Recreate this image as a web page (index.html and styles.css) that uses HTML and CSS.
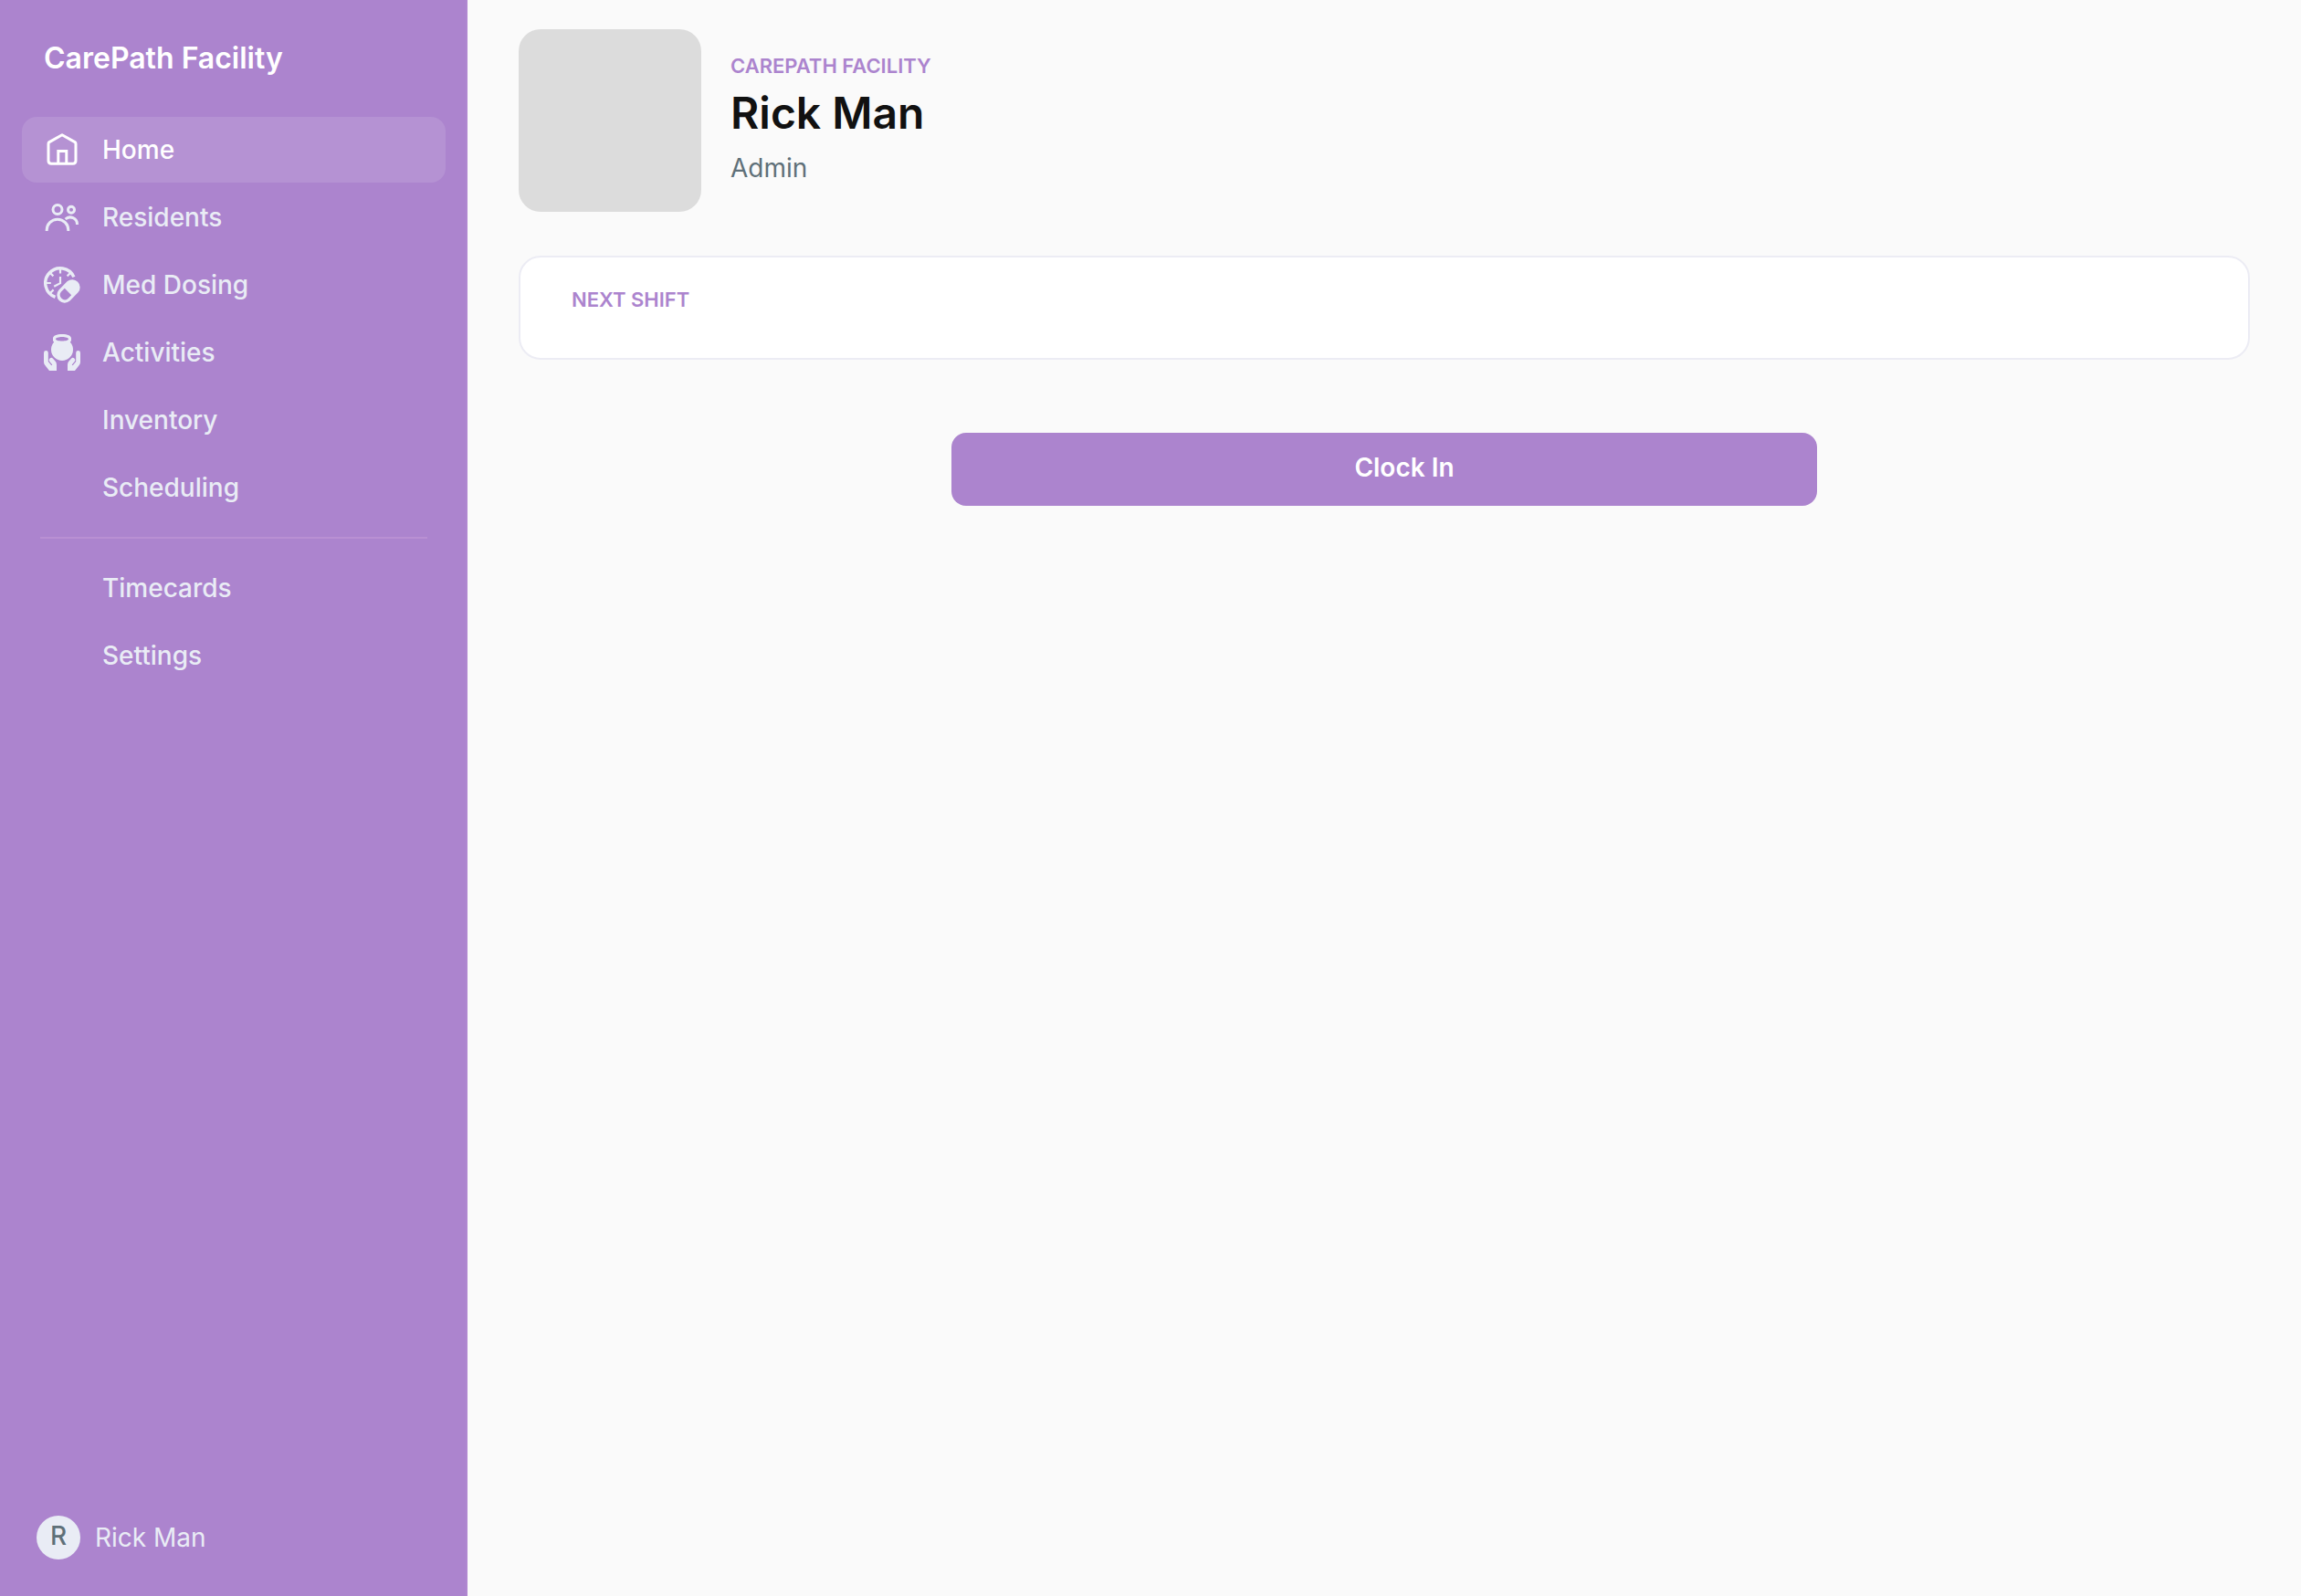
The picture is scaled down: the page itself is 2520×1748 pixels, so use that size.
FILE: index.html
```
<!DOCTYPE html>
<html lang="en">
<head>
    <meta charset="UTF-8">
    <meta name="viewport" content="width=device-width, initial-scale=1.0">
    <title>Home - CarePath Facility</title>
    <link rel="stylesheet" href="styles.css">
</head>
<body>
    <aside class="sidebar">
        <div class="brand">CarePath Facility</div>

        <nav class="nav" aria-label="Main">
            <a class="nav-link active" href="#home" aria-current="page">
                <svg class="nav-icon" viewBox="0 0 40 40" fill="none" stroke="currentColor" stroke-width="3" aria-hidden="true">
                    <path d="M20 3.7 34 11.6Q35 12.3 35 13.4V32Q35 35.2 31.8 35.2H8.2Q5 35.2 5 32V13.4Q5 12.3 6 11.6Z" stroke-linejoin="round"/>
                    <path d="M15.8 35V21.5H24.8V35"/>
                </svg>
                <span>Home</span>
            </a>
            <a class="nav-link" href="#residents">
                <svg class="nav-icon" viewBox="0 0 40 40" fill="none" stroke="currentColor" stroke-width="3" aria-hidden="true">
                    <circle cx="15" cy="11.5" r="5"/>
                    <circle cx="30" cy="11.7" r="3.5"/>
                    <path d="M3.2 35V34A11.8 11.8 0 0 1 26.8 34V35"/>
                    <path d="M23.6 22A7.7 7.7 0 0 1 36.5 28"/>
                </svg>
                <span>Residents</span>
            </a>
            <a class="nav-link" href="#med-dosing">
                <svg class="nav-icon" viewBox="0 0 40 40" fill="none" stroke="currentColor" stroke-width="2.2" aria-hidden="true">
                    <path d="M32.9 11.4A16.3 16.3 0 1 0 12.5 33.4" stroke-width="3.4"/>
                    <path d="M18 3V7.6M3 18H7.8M7 7 10.4 10.4M29 7 25.6 10.4M7 29 10.6 25.4"/>
                    <path d="M18 11V18.2L11.2 21.8"/>
                    <path fill="currentColor" stroke="none" fill-rule="evenodd" d="M16.5 25.5 25.5 16.3A8.5 8.5 0 0 1 37.5 28.3L28.5 37.5A8.5 8.5 0 0 1 16.5 25.5ZM22.8 23.8 18.8 27.8A5.3 5.3 0 0 0 26.2 35.2L30.2 31.2Z"/>
                </svg>
                <span>Med Dosing</span>
            </a>
            <a class="nav-link" href="#activities">
                <svg class="nav-icon" viewBox="0 0 40 40" fill="currentColor" aria-hidden="true">
                    <path fill-rule="evenodd" d="M20 0C26 0 30 1.7 30 4.6V6.4Q30 7.7 28.8 8.8A12 12 0 1 1 11.2 8.8Q10 7.7 10 6.4V4.6C10 1.7 14 0 20 0ZM20 3C16 3 13 4 13 5.3S16 7.6 20 7.6 27 6.6 27 5.3 24 3 20 3Z"/>
                    <path d="M2.4 18A2.4 2.4 0 0 0 0 20.4V30.5A6 6 0 0 0 1.3 34.1L6 40H14V33.5A6 6 0 0 0 12.5 29.5L10 26.8A2.4 2.4 0 0 0 6.3 30L9.3 33.4 8.3 34.3 4.8 30V20.4A2.4 2.4 0 0 0 2.4 18Z"/>
                    <path d="M37.6 18A2.4 2.4 0 0 1 40 20.4V30.5A6 6 0 0 1 38.7 34.1L34 40H26V33.5A6 6 0 0 1 27.5 29.5L30 26.8A2.4 2.4 0 0 1 33.7 30L30.7 33.4 31.7 34.3 35.2 30V20.4A2.4 2.4 0 0 1 37.6 18Z"/>
                </svg>
                <span>Activities</span>
            </a>
            <a class="nav-link" href="#inventory">
                <span class="nav-icon"></span>
                <span>Inventory</span>
            </a>
            <a class="nav-link" href="#scheduling">
                <span class="nav-icon"></span>
                <span>Scheduling</span>
            </a>
            <hr class="nav-divider">
            <a class="nav-link" href="#timecards">
                <span class="nav-icon"></span>
                <span>Timecards</span>
            </a>
            <a class="nav-link" href="#settings">
                <span class="nav-icon"></span>
                <span>Settings</span>
            </a>
        </nav>

        <a class="account" href="#account">
            <span class="account-initial">R</span>
            <span>Rick Man</span>
        </a>
    </aside>

    <main class="content">
        <header class="profile">
            <div class="profile-photo"></div>
            <div class="profile-info">
                <p class="eyebrow">Carepath Facility</p>
                <h1>Rick Man</h1>
                <p class="role">Admin</p>
            </div>
        </header>

        <section class="card">
            <h2 class="eyebrow">Next Shift</h2>
        </section>

        <button class="clock-btn" type="button">
            <span class="clock-icon"></span>
            <span>Clock In</span>
        </button>
    </main>
</body>
</html>
```

FILE: styles.css
```
:root {
    --purple: #ac84ce;
    --purple-light: #b592d3;
    --mist: #e9ecf5;
    --slate: #5f7079;
    --ink: #111111;
    --page: #fafafa;
    --white: #ffffff;
}

* {
    margin: 0;
    padding: 0;
    box-sizing: border-box;
}

body {
    display: flex;
    min-height: 100vh;
    background-color: var(--page);
    color: var(--ink);
    font-family: Inter, sans-serif;
    font-size: 28px;
    line-height: 40px;
}

a {
    color: inherit;
    text-decoration: none;
}

/* Sidebar */
.sidebar {
    display: flex;
    flex-direction: column;
    flex: 0 0 512px;
    padding: 40px 22px 40px 24px;
    background-color: var(--purple);
    border-right: 2px solid #b088d0;
    color: var(--mist);
}

.brand {
    padding: 0 24px;
    margin-bottom: 40px;
    color: var(--white);
    font-size: 32px;
    font-weight: 600;
    line-height: 48px;
}

.nav {
    display: flex;
    flex-direction: column;
    gap: 2px;
}

.nav-link {
    display: flex;
    align-items: center;
    gap: 24px;
    padding: 16px 24px;
    border-radius: 16px;
    font-weight: 500;
}

.nav-link.active {
    background-color: var(--purple-light);
    color: var(--white);
}

.nav-icon {
    flex: none;
    width: 40px;
    height: 40px;
}

.nav-divider {
    height: 2px;
    margin: 16px 20px;
    border: none;
    background-color: #b990d3;
}

.account {
    display: flex;
    align-items: center;
    gap: 16px;
    padding: 0 16px;
    margin-top: auto;
}

.account-initial {
    width: 48px;
    height: 48px;
    border-radius: 50%;
    background-color: var(--mist);
    color: var(--slate);
    font-weight: 500;
    line-height: 44px;
    text-align: center;
}

/* Main content */
.content {
    flex: 1;
    padding: 32px 56px;
}

.profile {
    display: flex;
    align-items: center;
    gap: 32px;
    margin-bottom: 48px;
}

.profile-photo {
    width: 200px;
    height: 200px;
    border-radius: 24px;
    background-color: #dcdcdc;
}

.profile-info {
    padding-bottom: 4px;
}

.eyebrow {
    color: var(--purple);
    font-size: 22px;
    font-weight: 600;
    line-height: 32px;
    text-transform: uppercase;
}

h1 {
    margin: 4px 0 8px;
    font-size: 48px;
    font-weight: 600;
    line-height: 64px;
}

.role {
    color: var(--slate);
}

.card {
    padding: 30px 56px 48px;
    border: 2px solid #ececf4;
    border-radius: 24px;
    background-color: var(--white);
}

.clock-btn {
    display: flex;
    align-items: center;
    justify-content: center;
    gap: 12px;
    width: 50%;
    height: 80px;
    margin: 80px auto 0;
    padding-bottom: 4px;
    border: none;
    border-radius: 16px;
    background-color: var(--purple);
    color: var(--white);
    font: inherit;
    font-weight: 600;
    cursor: pointer;
}

.clock-icon {
    width: 32px;
    height: 32px;
}
```
